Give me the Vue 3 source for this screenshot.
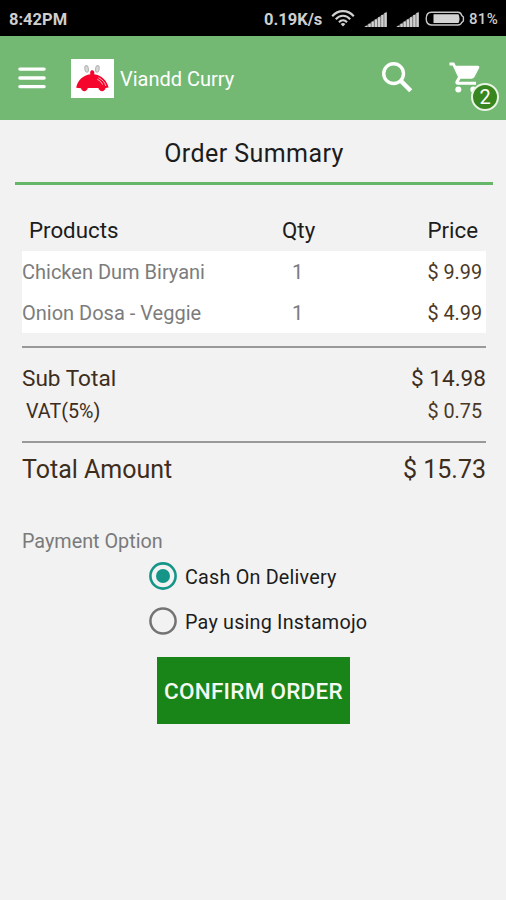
<script setup>
const items = [
  { name: 'Chicken Dum Biryani', qty: 1, price: '$ 9.99' },
  { name: 'Onion Dosa - Veggie', qty: 1, price: '$ 4.99' },
]
const signalBars = [0, 1, 2, 3, 4, 5, 6]
</script>

<template>
  <div class="screen">
    <div class="status">
      <span class="clock">8:42PM</span>
      <span class="speed">0.19K/s</span>
      <svg class="wifi" viewBox="0 0 24 18" fill="none" stroke="#d2d2d2" stroke-width="2.1">
        <path d="M1.2 7.2C7.2 0.4 16.8 0.4 22.8 7.2" />
        <path d="M4.8 10.2C8.8 5.6 15.2 5.6 19.2 10.2" />
        <path d="M8 13.2C10.2 10.6 13.8 10.6 16 13.2" />
        <path d="M12 17.4L9.6 14.9Q12 12.9 14.4 14.9Z" fill="#d2d2d2" stroke="none" />
      </svg>
      <svg v-for="n in 2" :key="n" class="signal" viewBox="0 0 24 17">
        <path d="M0 16L23 0.5V16Z" fill="#6c6c6c" />
        <path
          v-for="i in signalBars"
          :key="i"
          :d="`M${1.2 + i * 3.2} 16V${15 - i * 2.2}h2.3V16Z`"
          fill="#d0d0d0"
        />
      </svg>
      <svg class="battery" viewBox="0 0 40 16">
        <path d="M6.5 1.2H33Q36 1.2 36.8 4.6L38.4 6V10L36.8 11.4Q36 14 33 14H6.5C3 14 1.2 11.2 1.2 7.6S3 1.2 6.5 1.2Z" fill="none" stroke="#c8c8c8" stroke-width="1.4" />
        <path d="M8.5 3.2H33.5Q35.5 7.6 33.5 12.1H8.5Z" fill="#d4d4d4" />
      </svg>
      <span class="percent">81%</span>
    </div>

    <header class="bar">
      <svg class="menu" viewBox="0 0 28 22" stroke="#fff" stroke-width="3.4" stroke-linecap="round">
        <path d="M1.9 2.1H26.1M1.9 11H26.1M1.9 19.6H26.1" />
      </svg>
      <svg class="logo" viewBox="0 0 43 39">
        <rect width="43" height="39" fill="#fff" />
        <g fill="#d8d8d8" stroke="#b4b4b4" stroke-width="1">
          <ellipse cx="15.6" cy="9.8" rx="1.8" ry="3.4" transform="rotate(-8 15.6 9.8)" />
          <ellipse cx="26.4" cy="9.8" rx="1.8" ry="3.4" transform="rotate(8 26.4 9.8)" />
        </g>
        <path d="M19.4 15.2C18.6 12.2 20 11.2 21.2 11.2S23.9 12.2 23.1 15.2C30.5 16.2 36 21.6 37.6 28.6L34.6 29C34 33 28.5 33.4 27.3 29.1H16.9C15.8 33.3 11 33 10 29.3L5.2 28.8C6.4 21.4 12.2 16.1 19.4 15.2Z" fill="#f5052c" />
        <path d="M27.5 18.7Q33.6 21.7 34.8 27M26.2 20.1Q30.2 22.1 31.7 25.6" fill="none" stroke="#ffc9d0" stroke-width=".9" />
      </svg>
      <span class="brand">Viandd Curry</span>
      <svg class="search" viewBox="0 0 31 31" fill="none" stroke="#fff">
        <circle cx="11.6" cy="11.6" r="9.9" stroke-width="3.4" />
        <path d="M18.6 18.6L28.7 28.7" stroke-width="4.4" />
      </svg>
      <div class="cart">
        <svg class="trolley" viewBox="0 0 31 31" fill="#fff">
          <path d="M0.5 0.6H5.3L6.8 3.7H29Q31 4 30.2 6L25.6 14.8Q24.6 16.8 22.4 16.8H11.5L9.8 19.8H27V22.8H9Q5.6 22.4 6.5 19.3L9 14.9L3.6 3.4H0.5Z" />
          <circle cx="9.3" cy="27.6" r="3" />
          <circle cx="24.3" cy="27.6" r="3" />
        </svg>
        <span class="badge">2</span>
      </div>
    </header>

    <h1 class="title"><span>Order Summary</span></h1>

    <main class="content">
      <div class="row head">
        <span class="h-prod">Products</span><span class="h-qty">Qty</span><span class="h-price">Price</span>
      </div>
      <div class="items">
        <div v-for="item in items" :key="item.name" class="row item">
          <span class="name">{{ item.name }}</span>
          <span class="qty">{{ item.qty }}</span>
          <span class="price">{{ item.price }}</span>
        </div>
      </div>
      <div class="sums">
        <div class="row sub"><span>Sub Total</span><span class="sub-val">$ 14.98</span></div>
        <div class="row vat"><span class="vat-label">VAT(5%)</span><span class="price">$ 0.75</span></div>
      </div>
      <div class="row total"><span class="total-label">Total Amount</span><span class="total-val">$ 15.73</span></div>
      <div class="pay-label">Payment Option</div>
      <div class="options">
        <label class="option">
          <svg class="radio" viewBox="0 0 28 28"><circle cx="14" cy="14" r="12.6" fill="none" stroke="#159588" stroke-width="2.6" /><circle cx="14" cy="14" r="7" fill="#159588" /></svg>
          <span class="cash">Cash On Delivery</span>
        </label>
        <label class="option">
          <svg class="radio" viewBox="0 0 28 28"><circle cx="14" cy="14" r="12.6" fill="none" stroke="#737373" stroke-width="2.5" /></svg>
          <span class="insta">Pay using Instamojo</span>
        </label>
      </div>
      <button class="confirm">CONFIRM ORDER</button>
    </main>
  </div>
</template>

<style>
body {
  background: #f2f2f2;
}
</style>

<style scoped>
.screen {
  width: 506px;
  height: 900px;
  overflow: hidden;
  background: #f2f2f2;
  font-family: Roboto, sans-serif;
  color: #1c1c1c;
  white-space: nowrap;
}
.status {
  box-sizing: border-box;
  height: 36px;
  background: #000;
  color: #cfcfcf;
  display: flex;
  align-items: center;
  padding: 2px 0 0 9px;
  font-size: 16.5px;
  font-weight: 700;
}
.clock { width: 255px; }
.speed { width: 67px; }
.wifi { width: 24px; height: 18px; margin: -2px 9px 0 0; }
.signal { width: 24px; height: 17px; margin-right: 8px; }
.battery { width: 40px; height: 16px; margin: 0 4px 0 -3px; }
.percent { font-size: 15px; font-weight: 500; letter-spacing: 0.3px; }
.bar {
  box-sizing: border-box;
  height: 84px;
  background: #73b973;
  display: flex;
  align-items: center;
  padding-left: 18px;
}
.menu { width: 28px; height: 22px; margin-right: 25px; }
.logo { width: 43px; height: 39px; margin-right: 6px; }
.brand { color: #fff; font-size: 20px; width: 262px; padding-top: 2px; }
.search { width: 31px; height: 31px; margin-right: 36px; margin-top: -2px; }
.cart { position: relative; width: 31px; height: 31px; margin-top: -1px; }
.trolley { display: block; width: 31px; height: 31px; }
.badge {
  position: absolute;
  left: 22px;
  top: 21px;
  box-sizing: border-box;
  width: 28px;
  height: 28px;
  border: 2px solid #e9f4e4;
  border-radius: 50%;
  background: #37861f;
  color: #fff;
  font-size: 20px;
  line-height: 25px;
  text-align: center;
}
.title {
  height: 62px;
  margin: 0 13px 0 15px;
  border-bottom: 3px solid #66b76a;
  font-size: 25px;
  letter-spacing: 0.42px;
  line-height: 68px;
  font-weight: 400;
  text-align: center;
}
.content { padding: 0 20px 0 22px; }
.row { display: flex; justify-content: space-between; }
.head {
  height: 42px;
  padding: 24px 8px 0 7px;
  font-size: 22.3px;
  line-height: 42px;
}
.h-prod { width: 253px; }
.h-qty { flex: 1; }
.items { background: #fff; height: 82px; }
.item { height: 41px; line-height: 43px; font-size: 20px; padding-right: 4px; color: #7c7c7c; }
.name { width: 270px; }
.qty { flex: 1; }
.price { color: #4b3825; font-size: 19.8px; }
.sums { margin-top: 13px; border-top: 2px solid #999; border-bottom: 2px solid #999; height: 93px; color: #3d2d1d; }
.sub { font-size: 22.6px; line-height: 62px; height: 46px; }
.vat { font-size: 19.7px; line-height: 36px; padding: 0 4px; }
.total { height: 52px; line-height: 53px; font-size: 25px; color: #3d2d1d; }
.pay-label { height: 58px; line-height: 93px; font-size: 19.8px; color: #7a7a7a; }
.options { height: 98px; padding-left: 127px; }
.option { display: flex; align-items: center; height: 45px; font-size: 19.8px; letter-spacing: 0.2px; }
.option span { padding-top: 3px; }
.radio { width: 28px; height: 28px; margin-right: 8px; }
.confirm {
  display: block;
  width: 193px;
  height: 67px;
  margin: 6px 0 0 135px;
  padding: 0;
  border: 0;
  background: #198519;
  color: #f4f9f2;
  font: 500 22.5px/69px Roboto, sans-serif;
  letter-spacing: 0.25px;
}
</style>
